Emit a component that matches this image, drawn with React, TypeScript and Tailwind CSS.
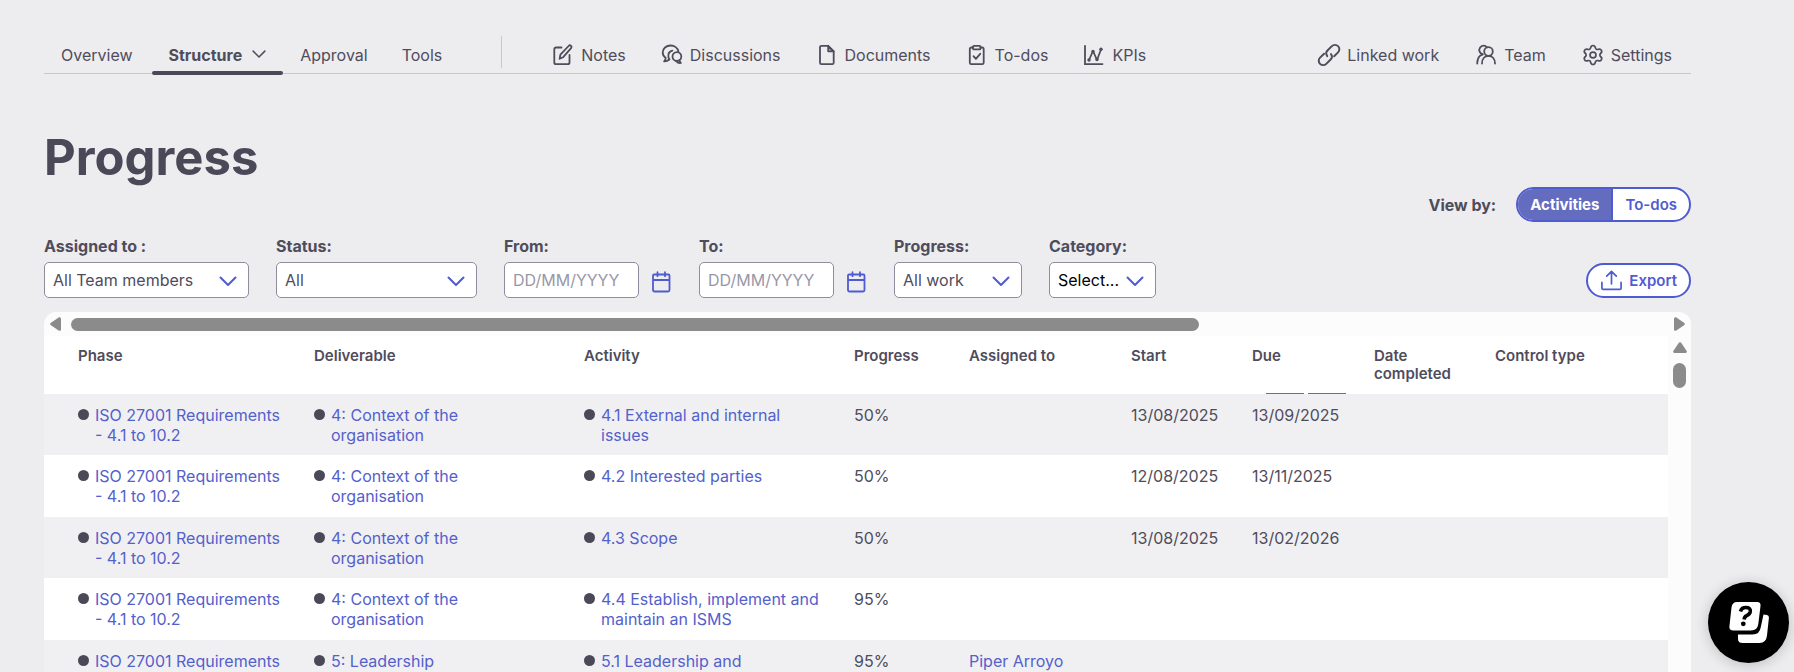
import { ReactNode, useState } from "react";

// One row of the progress table
interface Activity {
  deliverable: string;
  activity: string;
  progress: string;
  assignedTo?: string;
  start?: string;
  due?: string;
}

const PHASE = "ISO 27001 Requirements - 4.1 to 10.2";

const activities: Activity[] = [
  { deliverable: "4: Context of the organisation", activity: "4.1 External and internal issues", progress: "50%", start: "13/08/2025", due: "13/09/2025" },
  { deliverable: "4: Context of the organisation", activity: "4.2 Interested parties", progress: "50%", start: "12/08/2025", due: "13/11/2025" },
  { deliverable: "4: Context of the organisation", activity: "4.3 Scope", progress: "50%", start: "13/08/2025", due: "13/02/2026" },
  { deliverable: "4: Context of the organisation", activity: "4.4 Establish, implement and maintain an ISMS", progress: "95%" },
  { deliverable: "5: Leadership", activity: "5.1 Leadership and commitment", progress: "95%", assignedTo: "Piper Arroyo" },
];

const Icon = ({ children, className = "size-6", viewBox = "0 0 24 24" }: { children: ReactNode; className?: string; viewBox?: string }) => (
  <svg
    viewBox={viewBox}
    fill="none"
    stroke="currentColor"
    strokeWidth="1.8"
    strokeLinecap="round"
    strokeLinejoin="round"
    className={`shrink-0 ${className}`}
    aria-hidden="true"
  >
    {children}
  </svg>
);

const NotesIcon = () => (
  <Icon>
    <path d="M10.500 4.500H5A1.700 1.700 0 0 0 3.300 6.200v13.300A1.700 1.700 0 0 0 5 21.200h11.800a1.700 1.700 0 0 0 1.700-1.700V12" />
    <path d="M8.600 15.800l.8-4.200 8.200-8.600a1.600 1.600 0 0 1 2.500 2.100l-7.900 9.100z" />
  </Icon>
);

const DiscussionsIcon = () => (
  <Icon>
    <path d="M18.400 8.300A7.800 6.900 0 0 0 10.600 2.500C6.200 2.500 2.700 5.600 2.700 9.500c0 2.300 1.200 4.100 3 5.400-.1 1.500-.6 2.700-1.600 3.500 2.100.1 3.900-.6 5.300-2" />
    <path d="M12.400 7.600C9.300 8.500 7.900 11 8.400 13.800c.2 1.200.6 2 1 2.600" />
    <circle cx="16.900" cy="13.600" r="4.400" />
    <path d="M19.400 17.200c.2 1.200.6 2 1.500 2.700-1.900.3-3.500-.3-4.600-1.800" />
  </Icon>
);

const DocumentsIcon = () => (
  <Icon>
    <path d="M13 2.800H6.500A1.500 1.500 0 0 0 5 4.300v15.400a1.500 1.500 0 0 0 1.500 1.500h10.700a1.500 1.500 0 0 0 1.500-1.500V8.300z" />
    <path d="M13.200 2.800v5.500h5.500z" fill="currentColor" fillOpacity="0.35" />
  </Icon>
);

const TodosIcon = () => (
  <Icon>
    <path d="M8 4.500H6.300A1.500 1.500 0 0 0 4.800 6v13.700a1.500 1.500 0 0 0 1.500 1.500h10.900a1.500 1.500 0 0 0 1.500-1.500V6a1.500 1.500 0 0 0-1.500-1.500h-1.700" />
    <rect x="8" y="2.800" width="7.500" height="3.600" rx="1" />
    <path d="M8.500 13.200l2.400 2.600 4.300-5" />
  </Icon>
);

const KpisIcon = () => (
  <Icon>
    <path d="M3 2.800v18.300h17.500" strokeLinejoin="miter" />
    <path d="M7 17l4-9 4 9 4-10.500" />
    <g fill="currentColor" stroke="none">
      <circle cx="7" cy="17" r="1.700" />
      <circle cx="11" cy="8.500" r="1.700" />
      <circle cx="15" cy="16.500" r="1.700" />
      <circle cx="19" cy="6.300" r="1.700" />
    </g>
  </Icon>
);

const LinkIcon = () => (
  <Icon viewBox="1 1 22 22">
    <path d="M10.400 13c-1.300-1.800-1.200-3.700.2-5.100l4-4a4 4 0 0 1 5.700 0 4 4 0 0 1 0 5.700l-3.600 3.600" />
    <path d="M7.500 10.800l-3.700 3.600a4 4 0 0 0 0 5.700 4 4 0 0 0 5.700 0l4-4c1.400-1.400 1.500-3.300.3-5" />
  </Icon>
);

const TeamIcon = () => (
  <Icon>
    <circle cx="14.500" cy="8.500" r="4.300" />
    <path d="M8 20.500c0-4.600 2.500-7.600 6.500-7.600s6.500 3 6.500 7.600" />
    <path d="M13 4.400A4.300 4.300 0 1 0 8.600 11.200" />
    <path d="M8.600 11.600C5.200 12.300 3.400 15.300 3.200 20.500" />
  </Icon>
);

const SettingsIcon = () => (
  <Icon viewBox="1.500 0.300 21 21">
    <path d="M9.900 4.600c.3-1.600.8-2.100 2.100-2.100s1.800.5 2.100 2.100c.2 1 1.300 1.600 2.300 1.300 1.500-.6 2.300-.4 2.900.7.700 1.100.5 1.900-.7 2.900-.8.700-.8 1.900 0 2.600 1.200 1 1.400 1.800.7 2.900-.6 1.100-1.400 1.300-2.900.7-1-.3-2.100.3-2.300 1.300-.3 1.600-.8 2.100-2.100 2.100s-1.800-.5-2.100-2.100c-.2-1-1.300-1.600-2.300-1.300-1.500.6-2.300.4-2.900-.7-.7-1.100-.5-1.900.7-2.900.8-.7.8-1.900 0-2.600-1.200-1-1.400-1.800-.7-2.900.6-1.100 1.400-1.300 2.900-.7 1 .3 2.100-.3 2.300-1.300z" strokeWidth="1.500" />
    <circle cx="12" cy="10.800" r="2.600" strokeWidth="1.500" />
  </Icon>
);

const CalendarIcon = () => (
  <Icon viewBox="0 0 21 22" className="h-[22px] w-[21px]">
    <path d="M3 3.500h14.500a1 1 0 0 1 1 1V19a1.500 1.500 0 0 1-1.500 1.500H3.500A1.500 1.500 0 0 1 2 19V4.500a1 1 0 0 1 1-1zM2 9h16.500M6.500 1.200v4M14 1.200v4" />
  </Icon>
);

const Chevron = ({ className }: { className: string }) => (
  <svg viewBox="0 0 18 11" fill="none" stroke="currentColor" strokeWidth="2" className={className} aria-hidden="true">
    <path d="M1.500 1.500L9 9l7.500-7.500" strokeLinecap="round" strokeLinejoin="round" />
  </svg>
);

const NavLink = ({ icon, label }: { icon?: ReactNode; label: string }) => (
  <a href="#" className="flex items-center gap-1.5 px-[17px]">
    {icon}
    {label}
  </a>
);

const SelectField = ({ id, label, value, width, dark }: { id: string; label: string; value: string; width: string; dark?: boolean }) => (
  <div className={`flex flex-col gap-1.5 ${width}`}>
    <label htmlFor={id} className="font-bold">{label}</label>
    <div className="relative">
      <select
        id={id}
        className={`h-9 w-full appearance-none rounded-[5px] border border-[#8f8c9e] bg-white pl-2 pr-9 ${dark ? "text-black" : ""}`}
      >
        <option>{value}</option>
      </select>
      <Chevron className="pointer-events-none absolute right-3 top-3.5 w-[18px] text-[#4f5bd0]" />
    </div>
  </div>
);

const DateField = ({ id, label }: { id: string; label: string }) => (
  <div className="flex flex-col gap-1.5">
    <label htmlFor={id} className="font-bold">{label}</label>
    <div className="flex items-end gap-3">
      <input
        id={id}
        type="text"
        placeholder="DD/MM/YYYY"
        className="h-9 w-[135px] rounded-[5px] border border-[#8f8c9e] bg-white px-2 placeholder:text-[#9997a6]"
      />
      <button type="button" aria-label={`${label} pick a date`} className="pb-[5px] text-[#4f5bd0]">
        <CalendarIcon />
      </button>
    </div>
  </div>
);

const DotLink = ({ text }: { text: string }) => (
  <div className="flex gap-1.5">
    <span className="mt-1 size-[11px] shrink-0 rounded-full bg-[#4b4858]" />
    <a href="#" className="text-[#5460cc]">{text}</a>
  </div>
);

const App = () => {
  const [view, setView] = useState("Activities");

  return (
    <div className="flex h-screen flex-col overflow-hidden bg-[#ededef] pl-11 pr-[103px] font-['Inter',sans-serif] text-base leading-5 text-[#4f4c5c]">
      <nav className="mt-9 flex h-[38px] shrink-0 items-stretch border-b border-[#c6c7d0]">
        <NavLink label="Overview" />
        <a href="#" className="relative ml-0.5 flex items-center gap-2.5 px-[17px] font-bold">
          Structure
          <Chevron className="w-3.5" />
          <span className="absolute inset-x-0 -bottom-0.5 h-1 rounded-full bg-[#4b4858]" />
        </a>
        <NavLink label="Approval" />
        <NavLink label="Tools" />
        <span className="ml-[42px] mr-8 h-8 w-px bg-[#c6c7d0]" />
        <NavLink icon={<NotesIcon />} label="Notes" />
        <NavLink icon={<DiscussionsIcon />} label="Discussions" />
        <NavLink icon={<DocumentsIcon />} label="Documents" />
        <NavLink icon={<TodosIcon />} label="To-dos" />
        <NavLink icon={<KpisIcon />} label="KPIs" />
        <div className="ml-auto flex gap-px pr-0.5">
          <NavLink icon={<LinkIcon />} label="Linked work" />
          <NavLink icon={<TeamIcon />} label="Team" />
          <NavLink icon={<SettingsIcon />} label="Settings" />
        </div>
      </nav>

      <h1 className="mt-[55px] shrink-0 text-[49px] font-bold leading-[58px] text-[#4b4858]">Progress</h1>

      <div className="flex shrink-0 items-center justify-end gap-5">
        <span className="font-bold">View by:</span>
        <div className="flex h-[35px] overflow-hidden rounded-full border-2 border-[#4f5bd0] bg-white">
          {["Activities", "To-dos"].map((name) => (
            <button
              key={name}
              type="button"
              onClick={() => setView(name)}
              className={`px-3 text-[15px] first:border-r-2 first:border-[#4f5bd0] ${
                view === name ? "bg-[#646cc0] font-bold text-white" : "font-semibold text-[#4f5bd0]"
              }`}
            >
              {name}
            </button>
          ))}
        </div>
      </div>

      <div className="mt-3.5 flex shrink-0 items-end gap-[27px]">
        <SelectField id="assigned" label="Assigned to :" value="All Team members" width="w-[205px]" />
        <SelectField id="status" label="Status:" value="All" width="w-[201px]" />
        <DateField id="from" label="From:" />
        <DateField id="to" label="To:" />
        <SelectField id="progress" label="Progress:" value="All work" width="w-32" />
        <SelectField id="category" label="Category:" value="Select..." width="w-[107px]" dark />
        <button
          type="button"
          className="ml-auto flex h-[35px] items-center gap-1.5 rounded-full border-2 border-[#4f5bd0] bg-white px-3 text-[15px] font-semibold text-[#4f5bd0]"
        >
          <Icon className="size-[23px]">
            <path d="M2 14v6A1.300 1.300 0 0 0 3.300 21.300h17.400A1.300 1.300 0 0 0 22 20v-6M12 15.500V2.500M7 7.500l5-5 5 5" />
          </Icon>
          Export
        </button>
      </div>

      <div className="mt-3.5 flex min-h-0 flex-1 flex-col overflow-hidden rounded-t-xl bg-[#fcfcfc]">
        {/* horizontal scroll bar */}
        <div className="flex h-6 shrink-0 items-center px-1.5 text-[#8b8b8b]">
          <svg viewBox="0 0 11 14" fill="currentColor" className="w-[11px]" aria-hidden="true">
            <path d="M9 .3L.6 6q-.9 1 0 2L9 13.700q2 .6 2-1.400V1.700Q11-.3 9 .3z" />
          </svg>
          <div className="mx-2.5 flex-1">
            <div className="h-[13px] w-[70.8%] rounded-full bg-[#8b8b8b]" />
          </div>
          <svg viewBox="0 0 11 14" fill="currentColor" className="w-[11px]" aria-hidden="true">
            <path d="M2 .3L10.400 6q.9 1 0 2L2 13.700q-2 .6-2-1.400V1.700Q0-.3 2 .3z" />
          </svg>
        </div>

        <div className="flex min-h-0 flex-1">
          <div className="min-w-0 flex-1 overflow-hidden bg-white">
            <table className="w-full table-fixed text-left">
              <colgroup>
                <col className="w-[270px]" />
                <col className="w-[270px]" />
                <col className="w-[270px]" />
                <col className="w-[115px]" />
                <col className="w-[162px]" />
                <col className="w-[121px]" />
                <col className="w-[122px]" />
                <col className="w-[121px]" />
                <col />
              </colgroup>
              <thead className="h-[58px] text-[15px] leading-[18px]">
                <tr className="align-top *:pt-[11px] *:font-semibold">
                  <th className="pl-[34px]">Phase</th>
                  <th>Deliverable</th>
                  <th>Activity</th>
                  <th>Progress</th>
                  <th>Assigned to</th>
                  <th>Start</th>
                  <th className="relative">
                    Due
                    <span className="absolute bottom-0 left-3.5 flex gap-1">
                      <span className="h-px w-[38px] bg-[#a64d9c]" />
                      <span className="h-px w-[38px] bg-[#a64d9c]" />
                    </span>
                  </th>
                  <th className="pr-7">Date completed</th>
                  <th>Control type</th>
                </tr>
              </thead>
              <tbody>
                {activities.map((row) => (
                  <tr key={row.activity} className="h-[61px] align-top odd:bg-[#f0f0f2] even:h-[62px] *:pt-[11px]">
                    <td className="pl-[34px] pr-7"><DotLink text={PHASE} /></td>
                    <td className="pr-10"><DotLink text={row.deliverable} /></td>
                    <td className="pr-7"><DotLink text={row.activity} /></td>
                    <td>{row.progress}</td>
                    <td><a href="#" className="text-[#5460cc]">{row.assignedTo}</a></td>
                    <td>{row.start}</td>
                    <td>{row.due}</td>
                    <td />
                    <td />
                  </tr>
                ))}
              </tbody>
            </table>
          </div>

          {/* vertical scroll bar */}
          <div className="flex w-[23px] shrink-0 flex-col items-center gap-2.5 pt-1.5 text-[#8b8b8b]">
            <svg viewBox="0 0 14 11" fill="currentColor" className="w-3.5" aria-hidden="true">
              <path d="M.3 9L6 .6q1-.9 2 0L13.700 9q.6 2-1.400 2H1.700Q-.3 11 .3 9z" />
            </svg>
            <div className="h-[25px] w-[13px] rounded-full bg-[#8b8b8b]" />
          </div>
        </div>
      </div>

      <button
        type="button"
        aria-label="Help"
        className="fixed bottom-[9px] right-[5px] flex size-[81px] items-center justify-center rounded-full bg-black text-white shadow-[0_2px_14px_rgba(0,0,0,0.2)]"
      >
        <svg viewBox="0 0 40 41" className="w-10" aria-hidden="true">
          <path d="M8 0h20q4 0 3.500 4l-2.200 18q-.9 6.500-7.300 6.500H4.500Q0 28.500.4 24.500L2.500 5.500Q3.200 0 8 0z" fill="currentColor" />
          <path d="M34.500 12.500l3.300.6q2.400.4 2.100 3L38 33.500q-.8 7.500-7.500 7.500H13.500Q9 41 9 37v-4.500h14.500q7.300 0 8.300-7.500z" fill="currentColor" />
          <path d="M11.500 9.500Q12.500 5.500 16.800 5.500q5 0 4.500 4-.4 2.600-3.600 4.200-2.300 1-2.600 3.800" fill="none" stroke="black" strokeWidth="3.600" />
          <circle cx="14.300" cy="21.800" r="2.400" fill="black" />
        </svg>
      </button>
    </div>
  );
};

export default App;
